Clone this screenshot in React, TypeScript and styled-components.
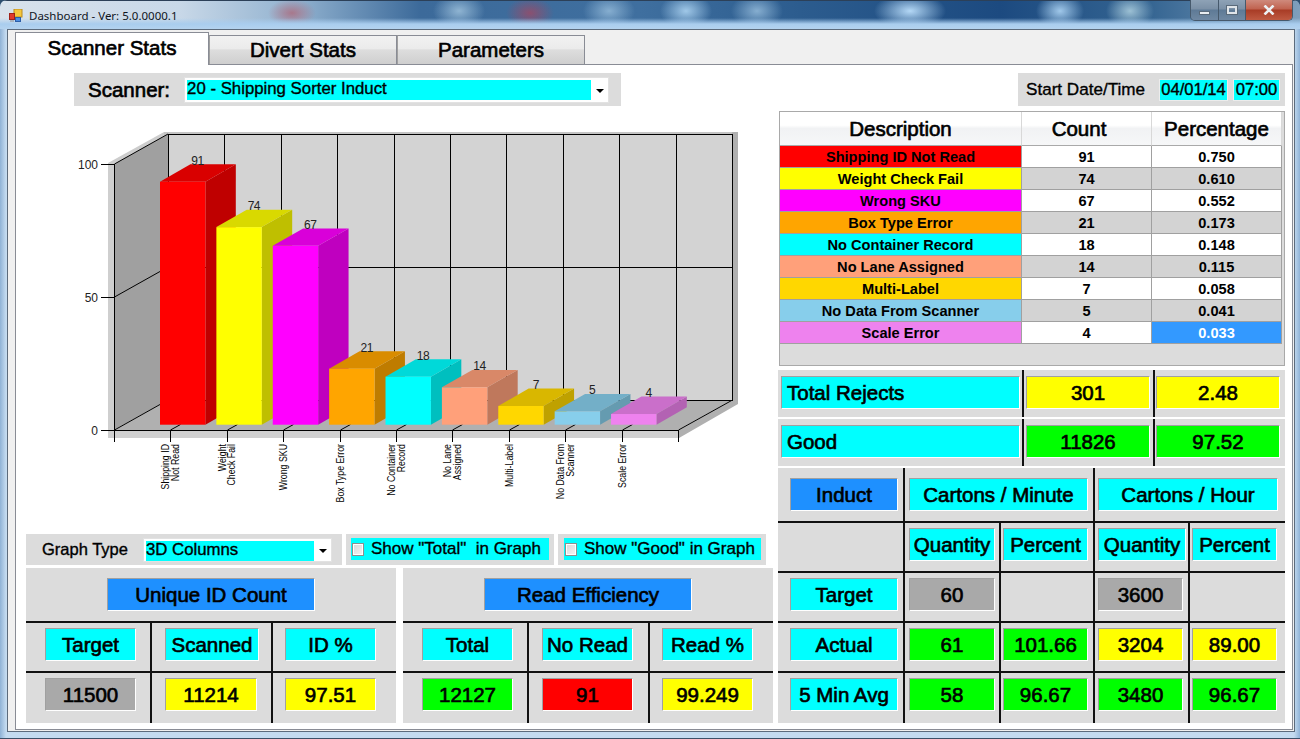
import styled, { createGlobalStyle, css } from "styled-components";

const GlobalStyle = createGlobalStyle`
    html, body {
        margin: 0;
        padding: 0;
        overflow: hidden;
        background: #2f4f6f;
    }
    * {
        box-sizing: border-box;
    }
`;

const heavy = css`
    -webkit-text-stroke: 0.65px currentColor;
`;

const medium = css`
    -webkit-text-stroke: 0.35px currentColor;
`;

const tones: Record<string, string> = {
    cyan: "#00ffff",
    yellow: "#ffff00",
    green: "#00ff00",
    gray: "#a9a9a9",
    blue: "#1e90ff",
    red: "#ff0000",
};

const bars = [
    { lines: ["Shipping ID", "Not Read"], value: 91, color: "#ff0000", desc: "Shipping ID Not Read", pct: "0.750" },
    { lines: ["Weight", "Check Fail"], value: 74, color: "#ffff00", desc: "Weight Check Fail", pct: "0.610" },
    { lines: ["Wrong SKU"], value: 67, color: "#ff00ff", desc: "Wrong SKU", pct: "0.552" },
    { lines: ["Box Type Error"], value: 21, color: "#ffa500", desc: "Box Type Error", pct: "0.173" },
    { lines: ["No Container", "Record"], value: 18, color: "#00ffff", desc: "No Container Record", pct: "0.148" },
    { lines: ["No Lane", "Assigned"], value: 14, color: "#ffa07a", desc: "No Lane Assigned", pct: "0.115" },
    { lines: ["Multi-Label"], value: 7, color: "#ffd700", desc: "Multi-Label", pct: "0.058" },
    { lines: ["No Data From", "Scanner"], value: 5, color: "#87ceeb", desc: "No Data From Scanner", pct: "0.041" },
    { lines: ["Scale Error"], value: 4, color: "#ee82ee", desc: "Scale Error", pct: "0.033" },
];

// darken a #rrggbb colour for the top and side faces of a column
function shade(hex: string, f: number) {
    const n = parseInt(hex.slice(1), 16);
    const r = Math.round(((n >> 16) & 255) * f);
    const g = Math.round(((n >> 8) & 255) * f);
    const b = Math.round((n & 255) * f);
    return `rgb(${r},${g},${b})`;
}

function Chart() {
    const cols = Array.from({ length: 11 }, (_, i) => i);
    const floorY = 424.7;
    const dx = 30.4;
    const dy = 17.4;

    return (
        <ChartSvg viewBox="26 106 747 428" width="747" height="428">
            {/* outer edges */}
            <polygon points="108,164 114,164 168,134 168,132 164,132 108,163" fill="#cdcdcd" />
            <rect x="164" y="132" width="574" height="3" fill="#c4c4c4" />
            <rect x="108" y="164" width="7" height="274" fill="#cfcfcf" />
            <rect x="108" y="430" width="571" height="8" fill="#d0d0d0" />
            <polygon points="732,132 738,132 738,404 679,438 678,430 732,400" fill="#b0b0b0" />

            {/* walls */}
            <rect x="168" y="134" width="565" height="267" fill="#d3d3d3" />
            <polygon points="114,164 168,134 168,400 114,430" fill="#a0a0a0" />
            <polygon points="114,430 168,400 732,400 678,430" fill="#b0b0b0" />

            {cols.map((i) => {
                const x = Math.round(168 + i * 56.4) + 0.5;
                return <line key={i} x1={x} x2={x} y1={134} y2={401} stroke="#000" shapeRendering="crispEdges" />;
            })}
            <line x1="168" x2="733" y1="134.5" y2="134.5" stroke="#000" shapeRendering="crispEdges" />
            <line x1="168" x2="733" y1="267.5" y2="267.5" stroke="#000" shapeRendering="crispEdges" />
            <line x1="168" x2="733" y1="400.5" y2="400.5" stroke="#000" shapeRendering="crispEdges" />
            <line x1="114.5" x2="168" y1="164" y2="134" stroke="#000" />
            <line x1="114.5" x2="168" y1="297" y2="267" stroke="#000" />
            <line x1="114.5" x2="168" y1="430" y2="400" stroke="#000" />
            <line x1="678.5" x2="732.5" y1="430" y2="400" stroke="#000" />

            {/* floor ticks and axes */}
            <line x1="114.5" x2="114.5" y1="164" y2="442" stroke="#000" shapeRendering="crispEdges" />
            <line x1="114" x2="679" y1="430.5" y2="430.5" stroke="#000" shapeRendering="crispEdges" />
            {cols.map((i) => {
                const x = Math.round(114 + i * 56.4) + 0.5;
                return (
                    <g key={i}>
                        <line x1={x} x2={x} y1={430} y2={442} stroke="#000" shapeRendering="crispEdges" />
                        {i > 0 && i < 10 && <line x1={x} x2={x + 10} y1={430} y2={424.5} stroke="#000" />}
                    </g>
                );
            })}
            {[164, 297, 430].map((y, i) => (
                <g key={y}>
                    <line x1="101" x2="114" y1={y + 0.5} y2={y + 0.5} stroke="#000" shapeRendering="crispEdges" />
                    <AxisValue x="98" y={y + 4.5}>{[100, 50, 0][i]}</AxisValue>
                </g>
            ))}

            {/* columns */}
            {bars.map((b, i) => {
                const x = 160 + i * 56.38;
                const top = floorY - b.value * 2.67;
                const w = 45.4;
                return (
                    <g key={b.desc}>
                        <polygon
                            points={`${x + w},${top} ${x + w + dx},${top - dy} ${x + w + dx},${floorY - dy} ${x + w},${floorY}`}
                            fill={shade(b.color, 0.75)}
                        />
                        <polygon
                            points={`${x},${top} ${x + dx},${top - dy} ${x + w + dx},${top - dy} ${x + w},${top}`}
                            fill={shade(b.color, 0.85)}
                        />
                        <rect x={x} y={top} width={w} height={floorY - top} fill={b.color} />
                        <BarValue x={x + 37.5} y={top - 17}>{b.value}</BarValue>
                    </g>
                );
            })}

            {/* category labels, rotated */}
            {bars.map((b, i) => {
                const tick = 114 + (i + 1) * 56.4;
                const base = b.lines.length === 2 ? [tick - 1.2, tick + 8.6] : [tick + 4];
                return b.lines.map((line, j) => (
                    <CategoryLabel key={line} transform={`translate(${base[j]} 444) rotate(-90) scale(0.88 1)`}>
                        {line}
                    </CategoryLabel>
                ));
            })}
        </ChartSvg>
    );
}

function AppIcon() {
    return (
        <svg width="14" height="14" viewBox="0 0 14 14">
            <rect x="5" y="0" width="8" height="8" fill="#f5c63c" stroke="#b98a1c" />
            <rect x="0.5" y="4.5" width="5" height="6" fill="#e0392c" stroke="#a02018" />
            <rect x="6.5" y="8.5" width="5" height="4" fill="#4d8ee0" stroke="#2c5ea8" />
            <rect x="1" y="11" width="4" height="2" fill="#a8b4c0" />
        </svg>
    );
}

function Combo({ value, width, height, fill }: { value: string; width: number; height: number; fill: number }) {
    return (
        <ComboBox $w={width} $h={height}>
            <ComboValue $w={fill}>{value}</ComboValue>
            <ComboArrow />
        </ComboBox>
    );
}

function ShowOption({ text, pad, fill }: { text: string; pad: number; fill: number }) {
    return (
        <OptionPanel $pad={pad}>
            <OptionBody $w={fill}>
                <CheckMark />
                <span>{text}</span>
            </OptionBody>
        </OptionPanel>
    );
}

function SummaryPanel({ title, head, values }: { title: string; head: string[]; values: { t: string; tone: string }[] }) {
    const pads = [19, 13, 12];
    return (
        <ThreeColPanel>
            <GridCell $span={3} $top={10} $center $lineB>
                <StatBox $tone="blue" $w={208}>{title}</StatBox>
            </GridCell>
            {head.map((h, i) => (
                <GridCell key={h} $pad={pads[i]} $top={5} $lineR={i < 2} $lineB>
                    <StatBox $tone="cyan" $w={h === "Scanned" ? 94 : 91}>{h}</StatBox>
                </GridCell>
            ))}
            {values.map((v, i) => (
                <GridCell key={v.t} $pad={pads[i]} $top={5} $lineR={i < 2}>
                    <StatBox $tone={v.tone} $w={head[i] === "Scanned" ? 92 : 91}>{v.t}</StatBox>
                </GridCell>
            ))}
        </ThreeColPanel>
    );
}

function TotalRow({ label, a, b, tone }: { label: string; a: string; b: string; tone: string }) {
    return (
        <TotalPanel>
            <GridCell $pad={3} $top={6} $lineR>
                <StatBox $tone="cyan" $w={239} $left>{label}</StatBox>
            </GridCell>
            <GridCell $pad={2} $top={6} $lineR>
                <StatBox $tone={tone} $w={124}>{a}</StatBox>
            </GridCell>
            <GridCell $pad={1} $top={6}>
                <StatBox $tone={tone} $w={124}>{b}</StatBox>
            </GridCell>
        </TotalPanel>
    );
}

const inductPads = [12, 4, 2, 3, 2];
const inductWidths = [108, 86, 85, 85, 85];

const inductRows: { label: string; cells: ({ t: string; tone: string } | null)[] }[] = [
    { label: "Target", cells: [{ t: "60", tone: "gray" }, null, { t: "3600", tone: "gray" }, null] },
    {
        label: "Actual",
        cells: [
            { t: "61", tone: "green" },
            { t: "101.66", tone: "green" },
            { t: "3204", tone: "yellow" },
            { t: "89.00", tone: "yellow" },
        ],
    },
    {
        label: "5 Min Avg",
        cells: [
            { t: "58", tone: "green" },
            { t: "96.67", tone: "green" },
            { t: "3480", tone: "green" },
            { t: "96.67", tone: "green" },
        ],
    },
];

function InductGrid() {
    const sub = ["Quantity", "Percent", "Quantity", "Percent"];
    return (
        <InductPanel>
            <GridCell $pad={12} $top={10} $lineR $lineB>
                <StatBox $tone="blue" $w={108}>Induct</StatBox>
            </GridCell>
            <GridCell $span={2} $pad={4} $top={10} $lineR $lineB>
                <StatBox $tone="cyan" $w={179}>Cartons / Minute</StatBox>
            </GridCell>
            <GridCell $span={2} $pad={3} $top={10} $lineB>
                <StatBox $tone="cyan" $w={180}>Cartons / Hour</StatBox>
            </GridCell>

            <GridCell $lineR $lineB />
            {sub.map((s, i) => (
                <GridCell key={i} $pad={inductPads[i + 1]} $top={5} $lineR={i < 3} $lineB>
                    <StatBox $tone="cyan" $w={i === 2 ? 88 : inductWidths[i + 1]}>{s}</StatBox>
                </GridCell>
            ))}

            {inductRows.map((row, r) => (
                <InductRowCells key={row.label} label={row.label} cells={row.cells} last={r === inductRows.length - 1} />
            ))}
        </InductPanel>
    );
}

function InductRowCells({ label, cells, last }: { label: string; cells: ({ t: string; tone: string } | null)[]; last: boolean }) {
    return (
        <>
            <GridCell $pad={12} $top={5} $lineR $lineB={!last}>
                <StatBox $tone="cyan" $w={108}>{label}</StatBox>
            </GridCell>
            {cells.map((c, i) => (
                <GridCell key={i} $pad={inductPads[i + 1]} $top={5} $lineR={i < 3} $lineB={!last}>
                    {c && <StatBox $tone={c.tone} $w={inductWidths[i + 1]}>{c.t}</StatBox>}
                </GridCell>
            ))}
        </>
    );
}

export default function App() {
    return (
        <>
            <GlobalStyle />
            <Window>
                <TitleBar>
                    <AppIcon />
                    <TitleText>Dashboard - Ver: 5.0.0000.1</TitleText>
                    <WindowButtons>
                        <WinButton $w={28}><MinGlyph /></WinButton>
                        <WinButton $w={27}><MaxGlyph /></WinButton>
                        <CloseButton>
                            <svg width="12" height="10" viewBox="0 0 12 10">
                                <path d="M1.5 0.5 L10.5 9.5 M10.5 0.5 L1.5 9.5" stroke="#eceff2" strokeWidth="2.6" />
                            </svg>
                        </CloseButton>
                    </WindowButtons>
                </TitleBar>

                <Client>
                    <TabStrip>
                        <Tab $active>Scanner Stats</Tab>
                        <Tab>Divert Stats</Tab>
                        <Tab>Parameters</Tab>
                    </TabStrip>

                    <Page>
                        <LeftColumn>
                            <ScannerPanel>
                                <ScannerLabel>Scanner:</ScannerLabel>
                                <Combo value="20 - Shipping Sorter Induct" width={425} height={26} fill={404} />
                            </ScannerPanel>

                            <Chart />

                            <OptionsRow>
                                <GraphTypePanel>
                                    <GraphTypeLabel>Graph Type</GraphTypeLabel>
                                    <Combo value="3D Columns" width={189} height={24} fill={168} />
                                </GraphTypePanel>
                                <ShowOption text={'Show "Total"  in Graph'} pad={5} fill={198} />
                                <ShowOption text={'Show "Good" in Graph'} pad={6} fill={197} />
                            </OptionsRow>

                            <SummaryRow>
                                <SummaryPanel
                                    title="Unique ID Count"
                                    head={["Target", "Scanned", "ID %"]}
                                    values={[
                                        { t: "11500", tone: "gray" },
                                        { t: "11214", tone: "yellow" },
                                        { t: "97.51", tone: "yellow" },
                                    ]}
                                />
                                <SummaryPanel
                                    title="Read Efficiency"
                                    head={["Total", "No Read", "Read %"]}
                                    values={[
                                        { t: "12127", tone: "green" },
                                        { t: "91", tone: "red" },
                                        { t: "99.249", tone: "yellow" },
                                    ]}
                                />
                            </SummaryRow>
                        </LeftColumn>

                        <RightColumn>
                            <DatePanel>
                                <DateLabel>Start Date/Time</DateLabel>
                                <DateBox $w={69}>04/01/14</DateBox>
                                <DateBox $w={47}>07:00</DateBox>
                            </DatePanel>

                            <ReasonPanel>
                                <ReasonTable>
                                    <colgroup>
                                        <col style={{ width: 242 }} />
                                        <col style={{ width: 130 }} />
                                        <col style={{ width: 130 }} />
                                    </colgroup>
                                    <thead>
                                        <tr>
                                            <HeadCell>Description</HeadCell>
                                            <HeadCell $shift={15}>Count</HeadCell>
                                            <HeadCell>Percentage</HeadCell>
                                        </tr>
                                    </thead>
                                    <tbody>
                                        {bars.map((b, i) => {
                                            const stripe = i % 2 === 0 ? "#ffffff" : "#d3d3d3";
                                            const selected = i === bars.length - 1;
                                            return (
                                                <tr key={b.desc}>
                                                    <RowCell $bg={b.color}>{b.desc}</RowCell>
                                                    <RowCell $bg={stripe}>{b.value}</RowCell>
                                                    <RowCell $bg={selected ? "#3399ff" : stripe} $light={selected}>{b.pct}</RowCell>
                                                </tr>
                                            );
                                        })}
                                    </tbody>
                                </ReasonTable>
                            </ReasonPanel>

                            <TotalRow label="Total Rejects" a="301" b="2.48" tone="yellow" />
                            <TotalRow label="Good" a="11826" b="97.52" tone="green" />
                            <InductGrid />
                        </RightColumn>
                    </Page>
                </Client>
            </Window>
        </>
    );
}

const Window = styled.div`
    width: 1300px;
    height: 739px;
    display: flex;
    flex-direction: column;
    font-family: "Liberation Sans", Arial, sans-serif;
    color: #000;
    border-radius: 7px 7px 0 0;
    overflow: hidden;
    background: linear-gradient(90deg, #8fb2d6 0, #c4dbf0 6px, #c4dbf0 1294px, #8fb2d6 100%);
    box-shadow: inset 0 -1px 0 #3c5068;
`;

const TitleBar = styled.header`
    height: 29px;
    flex: none;
    position: relative;
    display: flex;
    align-items: flex-start;
    padding: 8px 0 0 9px;
    border-top: 1px solid #2c4058;
    background:
        linear-gradient(180deg, transparent 0, transparent 17px, #a9cdee 23px, #b4d3ef 100%),
        radial-gradient(ellipse 26px 18px at 459px 10px, #8fb4d2, transparent),
        radial-gradient(ellipse 24px 16px at 530px 12px, #8a5070, transparent),
        radial-gradient(ellipse 26px 18px at 609px 10px, #86aed0, transparent),
        radial-gradient(ellipse 26px 18px at 686px 10px, #a0c8e8, transparent),
        radial-gradient(ellipse 26px 18px at 757px 10px, #86aed0, transparent),
        radial-gradient(ellipse 36px 18px at 910px 10px, #b4d8f6, transparent),
        radial-gradient(ellipse 24px 18px at 1060px 10px, #a0c8ea, transparent),
        radial-gradient(ellipse 24px 18px at 1130px 10px, #9cc0d4, transparent),
        radial-gradient(ellipse 24px 14px at 292px 12px, #a8788c, transparent),
        linear-gradient(90deg, #d8e2ec 0, #c8d8e8 180px, #8fb0ce 300px, #3c6a9a 420px, #3f6f9f 640px, #2c5c8e 800px, #1c4a80 1000px, #356592 1150px, #7f9fbc 1300px);
`;

const TitleText = styled.span`
    margin-left: 6px;
    font-family: "Noto Sans", "Open Sans", sans-serif;
    font-size: 11.5px;
    line-height: 14px;
    color: #10151c;
`;

const WindowButtons = styled.div`
    position: absolute;
    top: -1px;
    right: 7px;
    width: 103px;
    height: 21px;
    display: flex;
    border: 1px solid #46596c;
    border-top: none;
    border-radius: 0 0 5px 5px;
    overflow: hidden;
`;

const WinButton = styled.div<{ $w: number }>`
    width: ${(p) => p.$w}px;
    display: flex;
    align-items: center;
    justify-content: center;
    border-right: 1px solid #46596c;
    background: linear-gradient(180deg, #8ea2b6 0, #7b90a6 45%, #5e7a96 50%, #6f88a2 100%);
`;

const MinGlyph = styled.i`
    width: 11px;
    height: 4px;
    margin-top: 6px;
    background: #e8ecf0;
    border: 1px solid #5a6a7a;
`;

const MaxGlyph = styled.i`
    width: 10px;
    height: 8px;
    background: transparent;
    border: 2px solid #dfe4e9;
    outline: 1px solid #5a6a7a;
`;

const CloseButton = styled.div`
    flex: 1;
    display: flex;
    align-items: center;
    justify-content: center;
    background: linear-gradient(180deg, #cf8a7c 0, #c0624f 45%, #a83c26 50%, #bf5a42 100%);
`;

const Client = styled.main`
    flex: 1;
    margin: 0 5px 7px 7px;
    padding: 0 1px 1px 7px;
    border: 1px solid #5c6b7c;
    background: #f0f0f0;
    display: flex;
    flex-direction: column;
    min-height: 0;
`;

const TabStrip = styled.nav`
    height: 34px;
    flex: none;
    display: flex;
    align-items: flex-end;
`;

const Tab = styled.div<{ $active?: boolean }>`
    width: ${(p) => (p.$active ? 194 : 188)}px;
    height: ${(p) => (p.$active ? 33 : 29)}px;
    display: flex;
    align-items: center;
    justify-content: center;
    font-size: 20.5px;
    ${heavy}
    border: 1px solid #898c95;
    border-bottom: none;
    position: relative;
    z-index: 1;
    ${(p) =>
        p.$active
            ? css`
                  background: #fff;
                  margin-bottom: -1px;
                  padding-bottom: 3px;
              `
            : css`
                  background: linear-gradient(180deg, #f2f2f2 0, #ebebeb 45%, #dddddd 50%, #cfcfcf 100%);
                  border-left-color: #a0a0a0;
              `}
`;

const Page = styled.section`
    flex: 1;
    min-height: 0;
    background: #fff;
    border: 1px solid #898c95;
    padding: 8px 0 0 10px;
    display: grid;
    grid-template-columns: 747px 507px;
    column-gap: 5px;
    align-content: start;
`;

const LeftColumn = styled.div`
    display: flex;
    flex-direction: column;
`;

const RightColumn = styled.div`
    display: flex;
    flex-direction: column;
    gap: 2px;
`;

const ScannerPanel = styled.div`
    margin-left: 48px;
    width: 547px;
    height: 33px;
    display: flex;
    align-items: center;
    background: #dcdcdc;
    padding-left: 14px;
    gap: 14px;
`;

const ScannerLabel = styled.span`
    font-size: 20.5px;
    ${heavy}
`;

const ComboBox = styled.div<{ $w: number; $h: number }>`
    position: relative;
    width: ${(p) => p.$w}px;
    height: ${(p) => p.$h}px;
    background: #fff;
    border: 1px solid #e2e2e2;
    padding: 2px 0 0 2px;
    font-size: 16.8px;
    ${medium}
`;

const ComboValue = styled.div<{ $w: number }>`
    width: ${(p) => p.$w}px;
    height: 20px;
    line-height: 18px;
    background: #00ffff;
`;

const ComboArrow = styled.i`
    position: absolute;
    right: 4px;
    top: 50%;
    margin-top: -1px;
    border-left: 4px solid transparent;
    border-right: 4px solid transparent;
    border-top: 4px solid #000;
`;

const ChartSvg = styled.svg`
    display: block;
    flex: none;
`;

const AxisValue = styled.text`
    font-size: 12px;
    text-anchor: end;
    fill: #222;
`;

const BarValue = styled.text`
    font-size: 12px;
    letter-spacing: -0.5px;
    text-anchor: middle;
    fill: #222;
`;

const CategoryLabel = styled.text`
    font-size: 10px;
    text-anchor: end;
    fill: #000;
`;

const OptionsRow = styled.div`
    display: flex;
    gap: 4px;
    height: 31px;
    flex: none;
`;

const GraphTypePanel = styled.div`
    width: 316px;
    display: flex;
    align-items: center;
    background: #dcdcdc;
    padding-left: 16px;
    gap: 15px;
`;

const GraphTypeLabel = styled.span`
    font-size: 16.5px;
    ${medium}
`;

const OptionPanel = styled.div<{ $pad: number }>`
    width: 208px;
    background: #dcdcdc;
    padding: 4px 0 0 ${(p) => p.$pad}px;
`;

const OptionBody = styled.div<{ $w: number }>`
    width: ${(p) => p.$w}px;
    height: 22px;
    display: flex;
    align-items: center;
    gap: 7px;
    background: #00ffff;
    padding-left: 1px;
    font-size: 17px;
    white-space: pre;
    ${medium}
`;

const CheckMark = styled.i`
    width: 12px;
    height: 13px;
    background: linear-gradient(135deg, #d8d8d8, #f4f4f4);
    border: 1px solid #8e8f8f;
    box-shadow: inset 0 0 0 1px #fff;
`;

const SummaryRow = styled.div`
    margin-top: 3px;
    display: flex;
    gap: 7px;
`;

const ThreeColPanel = styled.div`
    width: 370px;
    height: 155px;
    background: #dcdcdc;
    display: grid;
    grid-template-columns: 126px 121px 123px;
    grid-template-rows: 55px 50px 50px;
`;

const GridCell = styled.div<{ $span?: number; $pad?: number; $top?: number; $center?: boolean; $lineR?: boolean; $lineB?: boolean }>`
    display: flex;
    align-items: flex-start;
    justify-content: ${(p) => (p.$center ? "center" : "flex-start")};
    grid-column: span ${(p) => p.$span || 1};
    padding: ${(p) => p.$top || 0}px 0 0 ${(p) => p.$pad || 0}px;
    border-right: ${(p) => (p.$lineR ? "2px solid #111" : "none")};
    border-bottom: ${(p) => (p.$lineB ? "2px solid #111" : "none")};
`;

const StatBox = styled.div<{ $tone: string; $w: number; $left?: boolean }>`
    width: ${(p) => p.$w}px;
    height: 33px;
    flex: none;
    display: flex;
    align-items: center;
    justify-content: ${(p) => (p.$left ? "flex-start" : "center")};
    padding-left: ${(p) => (p.$left ? 5 : 0)}px;
    background: ${(p) => tones[p.$tone]};
    border: 1px solid;
    border-color: #a0a0a0 #fff #fff #a0a0a0;
    font-size: 20.5px;
    white-space: nowrap;
    ${heavy}
`;

const DatePanel = styled.div`
    align-self: flex-end;
    width: 267px;
    height: 33px;
    display: flex;
    align-items: center;
    background: #dcdcdc;
    padding-left: 8px;
    margin-bottom: 3px;
    font-size: 17.1px;
`;

const DateLabel = styled.span`
    width: 133px;
    flex: none;
    ${medium}
`;

const DateBox = styled.div<{ $w: number }>`
    width: ${(p) => p.$w}px;
    height: 22px;
    margin-right: 5px;
    display: flex;
    align-items: center;
    justify-content: center;
    background: #00ffff;
    border: 1px solid #ececec;
    font-size: 16.6px;
    ${medium}
`;

const ReasonPanel = styled.div`
    height: 255px;
    margin: 0 0 2px 1px;
    border: 1px solid #a9a9a9;
    background: #dcdcdc;
    flex: none;
    overflow: hidden;
`;

const ReasonTable = styled.table`
    width: 502px;
    table-layout: fixed;
    border-collapse: separate;
    border-spacing: 0;
`;

const HeadCell = styled.th<{ $shift?: number }>`
    height: 34px;
    padding: 0 ${(p) => p.$shift || 0}px 0 0;
    font-size: 20.5px;
    font-weight: 400;
    ${heavy}
    text-align: center;
    background: linear-gradient(180deg, #ffffff 0, #ffffff 40%, #f1f2f4 50%, #f6f7f8 100%);
    border-right: 1px solid #d8d8d8;
    border-bottom: 1px solid #a9a9a9;
`;

const RowCell = styled.td<{ $bg: string; $light?: boolean }>`
    height: 22px;
    padding: 0;
    text-align: center;
    font-size: 14.6px;
    font-weight: 700;
    background: ${(p) => p.$bg};
    color: ${(p) => (p.$light ? "#fff" : "#000")};
    border-right: 1px solid #a0a0a0;
    border-bottom: 1px solid #a0a0a0;
`;

const TotalPanel = styled.div`
    height: 47px;
    flex: none;
    background: #dcdcdc;
    display: grid;
    grid-template-columns: 246px 131px 130px;
`;

const InductPanel = styled.div`
    height: 255px;
    flex: none;
    background: #dcdcdc;
    display: grid;
    grid-template-columns: 127px 96px 94px 95px 95px;
    grid-template-rows: 55px 50px 50px 50px 50px;
`;
